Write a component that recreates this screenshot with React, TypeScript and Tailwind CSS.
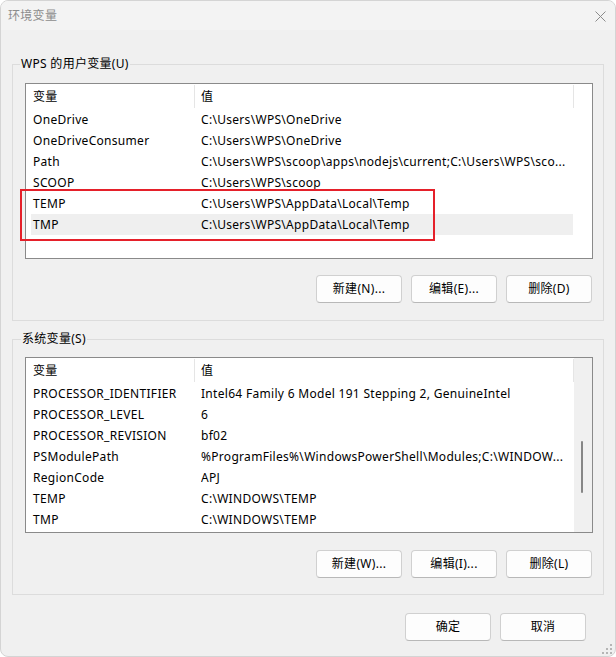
import React from "react";

const FONT = { fontFamily: '"Noto Sans", "Noto Sans CJK SC", sans-serif' };

type Row = [string, string];

const userRows: Row[] = [
  ["OneDrive", "C:\\Users\\WPS\\OneDrive"],
  ["OneDriveConsumer", "C:\\Users\\WPS\\OneDrive"],
  ["Path", "C:\\Users\\WPS\\scoop\\apps\\nodejs\\current;C:\\Users\\WPS\\sco..."],
  ["SCOOP", "C:\\Users\\WPS\\scoop"],
  ["TEMP", "C:\\Users\\WPS\\AppData\\Local\\Temp"],
  ["TMP", "C:\\Users\\WPS\\AppData\\Local\\Temp"],
];

const sysRows: Row[] = [
  ["PROCESSOR_IDENTIFIER", "Intel64 Family 6 Model 191 Stepping 2, GenuineIntel"],
  ["PROCESSOR_LEVEL", "6"],
  ["PROCESSOR_REVISION", "bf02"],
  ["PSModulePath", "%ProgramFiles%\\WindowsPowerShell\\Modules;C:\\WINDOW..."],
  ["RegionCode", "APJ"],
  ["TEMP", "C:\\WINDOWS\\TEMP"],
  ["TMP", "C:\\WINDOWS\\TEMP"],
];

function Btn({ label }: { label: string }) {
  return (
    <button className="w-[86px] h-[28px] rounded-[4px] border border-[#d0d0d0] border-b-[#b8b8b8] bg-[#fdfdfd] text-[12px] leading-[16px] text-black flex items-center justify-center">
      {label}
    </button>
  );
}

function Header() {
  return (
    <div className="flex h-[25px] items-center bg-white shrink-0">
      <div className="w-[168px] pl-[7px] leading-[16px]">变量</div>
      <div className="w-px h-[23px] bg-[#e5e5e5]" />
      <div className="w-[378px] pl-[6px] leading-[16px]">值</div>
      <div className="w-px h-[23px] bg-[#e5e5e5]" />
    </div>
  );
}

function Rows({ rows, selected }: { rows: Row[]; selected?: number }) {
  return (
    <div className="flex flex-col pl-[5px]">
      {rows.map(([k, v], i) => (
        <div
          key={i}
          className={`flex h-[21px] w-[542px] items-center leading-[21px] whitespace-nowrap overflow-hidden ${
            i === selected ? "bg-[#efefef]" : ""
          }`}
        >
          <div className="w-[170px] pl-[2px] shrink-0 overflow-hidden">{k}</div>
          <div className="flex-1 overflow-hidden">{v}</div>
        </div>
      ))}
    </div>
  );
}

export default function App() {
  return (
    <div className="w-[616px] h-[657px] bg-white text-[12px] tracking-[0.3px] text-black" style={FONT}>
      <div className="w-[616px] h-[657px] rounded-[8px] border border-[#d4d4d4] overflow-hidden bg-[#f0f0f0] flex flex-col relative">
        {/* Title bar */}
        <div className="h-[29px] bg-[#f3f3f3] flex items-center justify-between pl-[7px] pr-[9px] shrink-0">
          <span className="text-[#8c8c8c] leading-[16px] mt-[1px]">环境变量</span>
          <svg width="11" height="11" viewBox="0 0 11 11" className="mt-[1px]">
            <path d="M0.5 0.5 L10.5 10.5 M10.5 0.5 L0.5 10.5" stroke="#8b8b8b" strokeWidth="1" fill="none" />
          </svg>
        </div>

        {/* Group 1 */}
        <div className="relative ml-[11px] mt-[34px] w-[592px] h-[257px] border border-[#dcdcdc] flex flex-col shrink-0">
          <span className="absolute -top-[9px] left-[7px] px-[1px] bg-[#f0f0f0] leading-[16px]">WPS 的用户变量(U)</span>
          <div className="ml-[12px] mt-[18px] w-[568px] h-[176px] border border-[#8a8a8a] bg-white flex flex-col overflow-hidden">
            <Header />
            <Rows rows={userRows} selected={5} />
          </div>
          <div className="flex justify-end gap-[9px] mt-[16px] mr-[11px]">
            <Btn label="新建(N)..." />
            <Btn label="编辑(E)..." />
            <Btn label="删除(D)" />
          </div>
          {/* red annotation */}
          <div className="absolute left-[7px] top-[124px] w-[415px] h-[52px] border-2 border-[#e5202a] pointer-events-none" />
        </div>

        {/* Group 2 */}
        <div className="relative ml-[11px] mt-[18px] w-[592px] h-[256px] border border-[#dcdcdc] flex flex-col shrink-0">
          <span className="absolute -top-[9px] left-[8px] px-[1px] bg-[#f0f0f0] leading-[16px]">系统变量(S)</span>
          <div className="ml-[12px] mt-[17px] w-[568px] h-[176px] border border-[#8a8a8a] bg-white flex overflow-hidden">
            <div className="w-[548px] flex flex-col">
              <Header />
              <Rows rows={sysRows} />
            </div>
            <div className="w-[18px] bg-[#f0f0f0] relative">
              <div className="absolute left-[7px] top-[83px] w-[2px] h-[52px] rounded-full bg-[#868686]" />
            </div>
          </div>
          <div className="flex justify-end gap-[9px] mt-[17px] mr-[11px]">
            <Btn label="新建(W)..." />
            <Btn label="编辑(I)..." />
            <Btn label="删除(L)" />
          </div>
        </div>

        {/* Bottom buttons */}
        <div className="flex justify-end gap-[9px] mt-[18px] mr-[29px]">
          <Btn label="确定" />
          <Btn label="取消" />
        </div>

        {/* resize grip */}
        <svg width="14" height="14" viewBox="0 0 14 14" className="absolute right-[1px] bottom-[0px]">
          <rect x="10" y="2" width="2" height="2" fill="#b5b5b5" />
          <rect x="6" y="6" width="2" height="2" fill="#b5b5b5" />
          <rect x="10" y="6" width="2" height="2" fill="#b5b5b5" />
          <rect x="2" y="10" width="2" height="2" fill="#b5b5b5" />
          <rect x="6" y="10" width="2" height="2" fill="#b5b5b5" />
          <rect x="10" y="10" width="2" height="2" fill="#b5b5b5" />
        </svg>
      </div>
    </div>
  );
}
